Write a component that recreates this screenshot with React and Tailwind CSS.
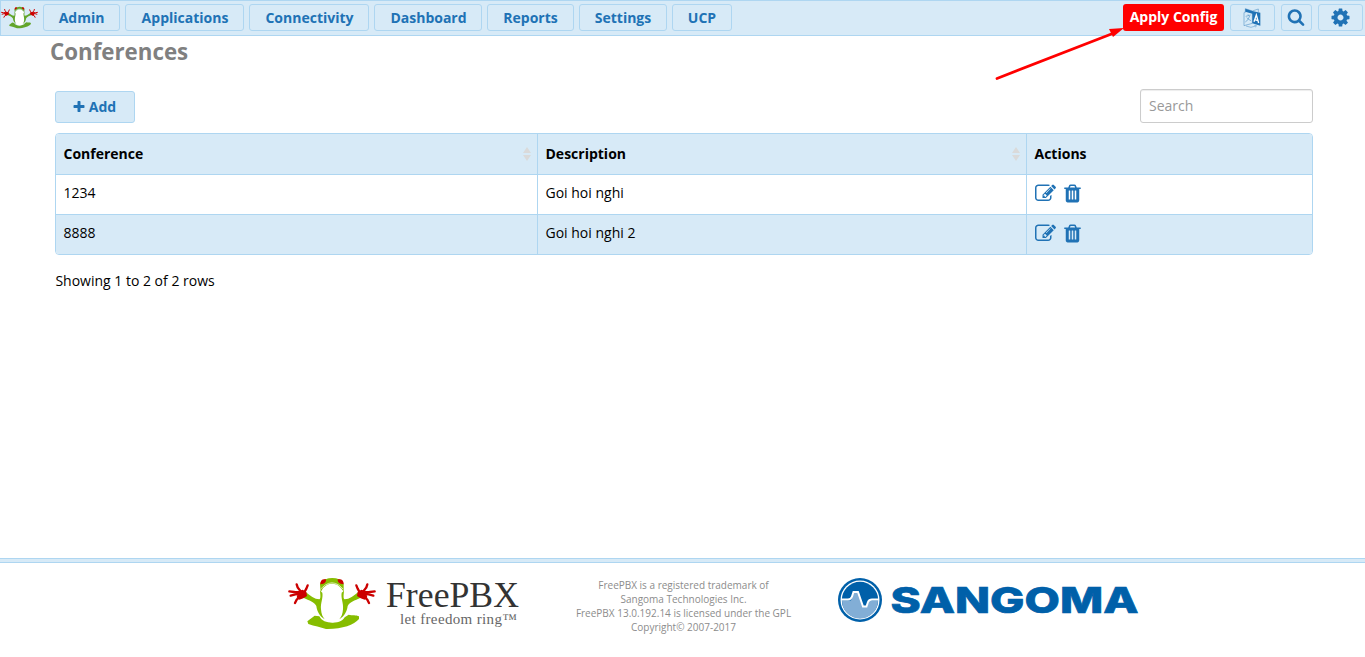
import React from "react";

const ICONS = {
  plus: "M1600 736v192q0 40-28 68t-68 28h-416v416q0 40-28 68t-68 28h-192q-40 0-68-28t-28-68v-416h-416q-40 0-68-28t-28-68v-192q0-40 28-68t68-28h416v-416q0-40 28-68t68-28h192q40 0 68 28t28 68v416h416q40 0 68 28t28 68z",
  search:
    "M1216 832q0-185-131.5-316.5t-316.5-131.5-316.5 131.5-131.5 316.5 131.5 316.5 316.5 131.5 316.5-131.5 131.5-316.5zm512 832q0 52-38 90t-90 38q-54 0-90-38l-343-342q-179 124-399 124-143 0-273.5-55.5t-225-150-150-225-55.5-273.5 55.5-273.5 150-225 225-150 273.5-55.5 273.5 55.5 225 150 150 225 55.5 273.5q0 220-124 399l343 343q37 37 37 90z",
  cog: "M1152 896q0-106-75-181t-181-75-181 75-75 181 75 181 181 75 181-75 75-181zm512-109v222q0 12-8 23t-20 13l-185 28q-19 54-39 91 35 50 107 138 10 12 10 25t-9 23q-27 37-99 108t-94 71q-12 0-26-9l-138-108q-44 23-91 38-16 136-29 186-7 28-36 28h-222q-14 0-24.5-8.5t-11.5-21.5l-28-184q-49-16-90-37l-141 107q-10 9-25 9-14 0-25-11-126-114-165-168-7-10-7-23 0-12 8-23 15-21 51-66.5t54-70.5q-27-50-41-99l-183-27q-13-2-21-12.5t-8-23.5v-222q0-12 8-23t19-13l186-28q14-46 39-92-40-57-107-138-10-12-10-24 0-10 9-23 26-36 98.5-107.5t94.5-71.5q13 0 26 10l138 107q44-23 91-38 16-136 29-186 7-28 36-28h222q14 0 24.5 8.5t11.5 21.5l28 184q49 16 90 37l142-107q9-9 24-9 13 0 25 10 129 119 165 170 7 8 7 22 0 12-8 23-15 21-51 66.5t-54 70.5q26 50 41 98l183 28q13 2 21 12.5t8 23.5z",
  edit: "M888 1184l116-116-152-152-116 116v56h96v96h56zm440-720q-16-16-33 1l-350 350q-17 17-1 33t33-1l350-350q17-17 1-33zm80 594v190q0 119-84.5 203.5t-203.5 84.5h-832q-119 0-203.5-84.5t-84.5-203.5v-832q0-119 84.5-203.5t203.5-84.5h832q63 0 117 25 15 7 18 23 3 17-9 29l-49 49q-14 14-32 8-23-6-45-6h-832q-66 0-113 47t-47 113v832q0 66 47 113t113 47h832q66 0 113-47t47-113v-126q0-13 9-22l64-64q15-15 35-7t20 29zm-96-738l288 288-672 672h-288v-288zm444 132l-92 92-288-288 92-92q28-28 68-28t68 28l152 152q28 28 28 68t-28 68z",
  trash:
    "M704 1376v-704q0-14-9-23t-23-9h-64q-14 0-23 9t-9 23v704q0 14 9 23t23 9h64q14 0 23-9t9-23zm256 0v-704q0-14-9-23t-23-9h-64q-14 0-23 9t-9 23v704q0 14 9 23t23 9h64q14 0 23-9t9-23zm256 0v-704q0-14-9-23t-23-9h-64q-14 0-23 9t-9 23v704q0 14 9 23t23 9h64q14 0 23-9t9-23zm-544-992h448l-48-117q-7-9-17-11h-317q-10 2-17 11zm928 32v64q0 14-9 23t-23 9h-96v948q0 83-47 143.5t-113 60.5h-832q-66 0-113-58.5t-47-141.5v-952h-96q-14 0-23-9t-9-23v-64q0-14 9-23t23-9h309l70-167q15-37 54-63t79-26h320q40 0 79 26t54 63l70 167h309q14 0 23 9t9 23z",
};

function Icon({ name, className }) {
  return (
    <svg viewBox="0 0 1792 1792" fill="currentColor" className={"shrink-0 " + className}>
      <path d={ICONS[name]} />
    </svg>
  );
}

function LanguageIcon() {
  return (
    <svg viewBox="0 0 54 60" fill="none" className="mr-px mt-px h-5 w-[18px] shrink-0">
      <path d="M7 11L3 14V53L28 46V16" stroke="#5f9ccb" strokeWidth="2" />
      <path d="M7 14V2L28 9L46 3V12" stroke="#5f9ccb" strokeWidth="2" />
      <path d="M7 2L28 9L52 14V53L28 46V17L7 11Z" fill="#2072b5" />
      <path d="M8 25L23 21M15 19L17 23M20 24Q17 36 7 42M11 29Q17 35 24 38" stroke="#5f9ccb" strokeWidth="2.2" />
      <path d="M33 41L40 21L47 45M35 35L45 38" stroke="#fff" strokeWidth="4" />
      <path d="M9 54Q24 62 38 54M34 52L40 52L38 58" stroke="#6ba5d1" strokeWidth="2" />
    </svg>
  );
}

function Limb() {
  return (
    <>
      <path
        fill="currentColor"
        d="M76 125C90 137 104 147 118 148C123 146 121 134 120 122L127 128C130 145 121 158 123 178C124 192 128 201 134 208C119 199 111 184 109 168C104 157 88 151 70 143Z"
      />
      <path d="M44 123L56 123L68 119L79 126L81 138L70 145L58 149L50 142L52 135Z" fill="#cc0000" />
      <g stroke="#cc0000" strokeWidth="7" strokeLinecap="round" fill="none">
        <path d="M28 124L42 126L62 130" />
        <path d="M32 137L46 133L60 132" />
        <path d="M50 103L53 112L65 128" />
        <path d="M83 106L79 116L70 132" />
        <path d="M45 159L50 149L64 136" />
      </g>
    </>
  );
}

function Frog({ className }) {
  return (
    <svg viewBox="24 81 264 159" className={"shrink-0 " + className}>
      <path
        fill="currentColor"
        d="M82 214L104 197L118 199C125 213 139 218 158 218C178 218 190 211 194 202L206 194C216 197 229 194 237 199V207C222 225 185 238 138 237C121 232 104 228 85 222Z"
      />
      <path fill="#fff" d="M125 122Q157 88 188 122C188 145 194 158 194 175C194 203 180 217 157 217C135 217 122 201 122 177C122 158 128 145 125 122Z" />
      <Limb />
      <g transform="translate(312 0) scale(-1 1)">
        <Limb />
      </g>
      <path fill="currentColor" d="M120 103C124 88 138 88 147 85Q157 83 167 85C176 88 188 88 191 103V125L183 114C172 103 166 101 155 101C145 101 138 105 129 114L122 127Z" />
      <path d="M122 117Q128 111 136 105Q156 92 176 105Q184 111 189 117" fill="none" stroke="#fff" strokeWidth="2" />
      <path fill="#cc0000" d="M121 103C121 90 127 86 138 88Q139 98 130 101ZM191 103C191 90 185 86 173 88Q172 98 182 101Z" />
    </svg>
  );
}

const NAV = [
  ["Admin", "w-[77px]"],
  ["Applications", "w-[119px] pl-px"],
  ["Connectivity", "w-[120px] pl-px"],
  ["Dashboard", "w-[108px] pl-px"],
  ["Reports", "w-[87px]"],
  ["Settings", "w-[88px]"],
  ["UCP", "w-[60px]"],
];

const BTN =
  "flex items-center justify-center rounded-[3px] border border-[#aed6f1] bg-[#d7eaf7] font-bold text-[#2072b5]";

function Sorter() {
  return (
    <svg viewBox="0 0 8 14" className="h-[14px] w-2 fill-[#dadada]">
      <path d="M4 0L8 6H0ZM4 14L0 8H8Z" />
    </svg>
  );
}

function Header() {
  return (
    <header className="flex h-9 items-start justify-between border border-r-0 border-[#aed6f1] bg-[#d7eaf7] pr-0.5 pt-[3px]">
      <div className="flex">
        <Frog className="mt-[2px] mr-[5px] h-[23px] w-[37px] text-[#63a52a]" />
        <nav className="flex gap-[5px]">
          {NAV.map(([label, width]) => (
            <button key={label} className={`${BTN} h-[27px] ${width}`}>
              {label}
            </button>
          ))}
        </nav>
      </div>
      <div className="flex gap-1.5">
        <button className="h-[27px] w-[101px] rounded-[3px] bg-[#ff0000] pb-px font-bold leading-[26px] text-white">
          Apply Config
        </button>
        <button className={`${BTN} h-[27px] w-[45px]`}>
          <LanguageIcon />
        </button>
        <button className={`${BTN} h-[27px] w-[31px] pb-px pr-px`}>
          <Icon name="search" className="size-[18px]" />
        </button>
        <button className={`${BTN} h-[27px] w-[45px]`}>
          <Icon name="cog" className="size-[21px]" />
        </button>
      </div>
    </header>
  );
}

const COLS = "grid grid-cols-[482px_489px_1fr]";
const CELL = "border-r border-[#aed6f1] pl-[7.5px] last:border-r-0";

function Row({ id, description, className = "" }) {
  return (
    <div className={`${COLS} border-t border-[#aed6f1] h-10 leading-[36px] ${className}`}>
      <div className={CELL}>{id}</div>
      <div className={CELL}>{description}</div>
      <div className={`${CELL} flex items-start gap-[7px] pt-2 text-[#2072b5]`}>
        <Icon name="edit" className="size-[21px]" />
        <Icon name="trash" className="size-[21px] -ml-px" />
      </div>
    </div>
  );
}

function Footer() {
  return (
    <footer className="mt-auto h-[99px]">
      <div className="h-[5px] border-y border-[#aed6f1] bg-[#d7eaf7]" />
      <div className="flex pl-[288px] pt-[14px]">
        <Frog className="h-[53px] w-[88px] text-[#86bd00]" />
        <svg viewBox="0 0 140 56" className="ml-[8px] h-[56px] w-[140px] overflow-visible">
          <text x="2" y="29.500" fontSize="36" textLength="133" lengthAdjust="spacingAndGlyphs" fill="#333" fontFamily="Liberation Serif, serif">
            FreePBX
          </text>
          <text x="16" y="46.500" fontSize="15" textLength="117" lengthAdjust="spacing" fill="#666" fontFamily="Liberation Serif, serif">
            let freedom ring™
          </text>
        </svg>
        <p className="ml-[39.5px] mt-px w-[240px] text-center text-[10px] leading-[14px] text-[#8c8c8c]">
          FreePBX is a registered trademark of
          <br />
          Sangoma Technologies Inc.
          <br />
          FreePBX 13.0.192.14 is licensed under the GPL
          <br />
          Copyright© 2007-2017
        </p>
        <svg viewBox="0 0 302 46" className="ml-[33.5px] h-[46px] w-[302px] overflow-visible">
          <circle cx="23" cy="23" r="22" fill="#0060a9" />
          <circle cx="23" cy="23" r="19.5" fill="#fff" />
          <circle cx="23" cy="23" r="18.2" fill="#0060a9" />
          <path d="M5 23.500H14L17 15H21L26 30H30L32 23.500H41A18 18 0 0 1 5 23.500Z" fill="#82aed6" />
          <path d="M4 22.500H11Q14 22.500 15 19.500L16.500 15H21L26 29.500H29.500L31 25Q32 22.500 35 22.500H42" fill="none" stroke="#fff" strokeWidth="2" />
          <text x="53.500" y="36.300" fontSize="36" fontWeight="800" textLength="248" lengthAdjust="spacingAndGlyphs" fill="#0060a9" stroke="#0060a9" strokeWidth="0.7" fontFamily="Inter, sans-serif">
            SANGOMA
          </text>
        </svg>
      </div>
    </footer>
  );
}

export default function App() {
  return (
    <div className="relative flex h-[657px] w-[1365px] flex-col overflow-hidden bg-white font-['Open_Sans',sans-serif] text-[14px] text-black">
      <Header />
      <main className="pl-[50px] pr-[52px]">
        <h1 className="h-8 text-[22.3px] font-bold leading-[31px] text-[#808080]">Conferences</h1>
        <div className="pl-[5px]">
          <div className="mt-[21px] flex items-start justify-between">
            <button className={`${BTN} mt-0.5 h-8 w-20 gap-[3px] pb-px pr-0.5`}>
              <Icon name="plus" className="size-[14px]" />
              Add
            </button>
            <input
              placeholder="Search"
              className="h-[34px] w-[173px] rounded-[3px] border border-[#ccc] px-2 pb-0.5 shadow-[inset_0_1px_1px_rgba(0,0,0,0.075)] placeholder:text-[#999]"
            />
          </div>
          <div className="mt-[10px] overflow-hidden rounded-[4px] border border-[#aed6f1]">
            <div className={`${COLS} h-10 bg-[#d7eaf7] font-bold leading-[40px]`}>
              <div className={`${CELL} flex items-center justify-between pr-[6px]`}>
                Conference
                <Sorter />
              </div>
              <div className={`${CELL} flex items-center justify-between pr-[6px]`}>
                Description
                <Sorter />
              </div>
              <div className={CELL}>Actions</div>
            </div>
            <Row id="1234" description="Goi hoi nghi" />
            <Row id="8888" description="Goi hoi nghi 2" className="bg-[#d7eaf7]" />
          </div>
          <p className="mt-4 pl-[0.4px] leading-5">Showing 1 to 2 of 2 rows</p>
        </div>
      </main>
      <Footer />
      <svg viewBox="0 0 132 56" className="pointer-events-none absolute left-[993.5px] top-[26px] h-[56px] w-[132px]">
        <path d="M3 52.500L120 7" stroke="#ff0000" strokeWidth="2.8" strokeLinecap="round" />
        <path d="M130 2L119 11L115 3Z" fill="#ff0000" />
      </svg>
    </div>
  );
}
